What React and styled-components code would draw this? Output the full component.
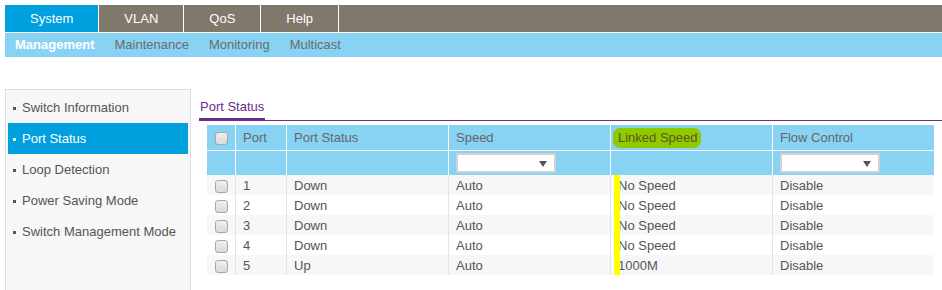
import styled, { createGlobalStyle } from 'styled-components';

const tabs = ['System', 'VLAN', 'QoS', 'Help'];
const subTabs = ['Management', 'Maintenance', 'Monitoring', 'Multicast'];
const menu = [
  'Switch Information',
  'Port Status',
  'Loop Detection',
  'Power Saving Mode',
  'Switch Management Mode',
];
const ports = [
  { port: 1, status: 'Down', speed: 'Auto', linked: 'No Speed', flow: 'Disable' },
  { port: 2, status: 'Down', speed: 'Auto', linked: 'No Speed', flow: 'Disable' },
  { port: 3, status: 'Down', speed: 'Auto', linked: 'No Speed', flow: 'Disable' },
  { port: 4, status: 'Down', speed: 'Auto', linked: 'No Speed', flow: 'Disable' },
  { port: 5, status: 'Up', speed: 'Auto', linked: '1000M', flow: 'Disable' },
];

const App = () => {
  return (
    <>
      <GlobalStyle />
      <Page>
        <TabBar>
          {tabs.map((t, i) => (
            <Tab key={t} active={i === 0}>{t}</Tab>
          ))}
        </TabBar>
        <SubBar>
          {subTabs.map((t, i) => (
            <SubTab key={t} active={i === 0}>{t}</SubTab>
          ))}
        </SubBar>
        <Body>
          <Sidebar>
            {menu.map((m) => (
              <MenuItem key={m} active={m === 'Port Status'}>
                <Bullet />
                {m}
              </MenuItem>
            ))}
          </Sidebar>
          <Main>
            <TitleBar>
              <TitleTab>Port Status</TitleTab>
            </TitleBar>
            <Table>
              <thead>
                <tr>
                  <Th width={28}><CheckBox /></Th>
                  <Th width={51}>Port</Th>
                  <Th width={162}>Port Status</Th>
                  <Th width={162}>Speed</Th>
                  <Th width={162}><Marker>Linked Speed</Marker></Th>
                  <Th width={162}>Flow Control</Th>
                </tr>
                <FilterRow>
                  <Th />
                  <Th />
                  <Th />
                  <Th><SelectBox /></Th>
                  <Th />
                  <Th><SelectBox /></Th>
                </FilterRow>
              </thead>
              <tbody>
                {ports.map((p, i) => (
                  <Row key={p.port} striped={i % 2 === 0}>
                    <Td><CheckBox /></Td>
                    <Td>{p.port}</Td>
                    <Td>{p.status}</Td>
                    <Td>{p.speed}</Td>
                    <LinkedTd>{p.linked}</LinkedTd>
                    <Td>{p.flow}</Td>
                  </Row>
                ))}
              </tbody>
            </Table>
          </Main>
        </Body>
      </Page>
    </>
  );
};

const GlobalStyle = createGlobalStyle`
  html, body {
    margin: 0;
    overflow: hidden;
    background: #fff;
    font-family: "Liberation Sans", Arial, sans-serif;
    font-size: 13px;
  }
`;

const Page = styled.div`
  padding: 5px 0 0 5px;
`;

const TabBar = styled.div`
  display: flex;
  height: 27px;
  background: #81786c;
  border-bottom: 1px solid #fff;
`;

const Tab = styled.div`
  padding: 0 25px;
  line-height: 27px;
  color: #fff;
  border-right: 1px solid #fff;
  background: ${(p) => (p.active ? '#00a0df' : 'transparent')};
`;

const SubBar = styled.div`
  display: flex;
  height: 24px;
  background: #88d3f4;
  padding-left: 0;
`;

const SubTab = styled.div`
  padding: 0 10px;
  line-height: 24px;
  color: ${(p) => (p.active ? '#fff' : '#6b6b6b')};
  font-weight: ${(p) => (p.active ? 'bold' : 'normal')};
`;

const Body = styled.div`
  display: flex;
  gap: 8px;
  margin-top: 32px;
`;

const Sidebar = styled.div`
  box-sizing: border-box;
  width: 186px;
  min-height: 240px;
  padding: 2px;
  background: #f7f7f7;
  border: 1px solid #dedede;
`;

const MenuItem = styled.div`
  display: flex;
  align-items: center;
  gap: 6px;
  height: 31px;
  padding-left: 5px;
  color: ${(p) => (p.active ? '#fff' : '#555')};
  background: ${(p) => (p.active ? '#00a0df' : 'transparent')};
`;

const Bullet = styled.span`
  width: 3px;
  height: 3px;
  background: currentColor;
  margin-top: 1px;
`;

const Main = styled.div`
  flex: 1;
`;

const TitleBar = styled.div`
  display: flex;
  border-bottom: 1px solid #6b2c8f;
  padding-top: 10px;
`;

const TitleTab = styled.div`
  line-height: 16px;
  padding: 0 1px 3px 1px;
  margin-bottom: -1px;
  color: #6b2c8f;
  border-bottom: 3px solid #6b2c8f;
`;

const Table = styled.table`
  table-layout: fixed;
  width: 727px;
  margin: 4px 8px 0 8px;
  border-collapse: separate;
  border-spacing: 0;
  color: #555;
`;

const Th = styled.th`
  box-sizing: border-box;
  width: ${(p) => (p.width ? `${p.width}px` : 'auto')};
  height: 25px;
  padding: 0 7px;
  text-align: left;
  font-weight: normal;
  color: #666;
  background: #88d3f4;
  border-left: 1px solid #fff;

  &:first-child {
    border-left: none;
    text-align: center;
    padding: 0;
  }
`;

const FilterRow = styled.tr`
  th {
    border-top: 1px solid #fff;
  }
`;

const Row = styled.tr`
  background: ${(p) => (p.striped ? '#f7f7f7' : '#fff')};
`;

const Td = styled.td`
  height: 20px;
  padding: 0 7px;
  border-left: 1px solid #e4e4e4;
  white-space: nowrap;

  &:first-child {
    border-left: none;
    text-align: center;
    padding: 0;
  }
`;

const LinkedTd = styled(Td)`
  position: relative;

  &::before {
    content: '';
    position: absolute;
    left: 3px;
    top: 0;
    bottom: 0;
    width: 6px;
    background: #ffff00;
  }
`;

const Marker = styled.span`
  display: inline-block;
  margin-left: -5px;
  padding: 3px 3px 3px 5px;
  line-height: 14px;
  border-radius: 7px;
  background: #8fc900;
  color: #575a1a;
`;

const CheckBox = styled.span`
  display: inline-block;
  box-sizing: border-box;
  width: 13px;
  height: 13px;
  vertical-align: middle;
  border: 1px solid #a8a8a8;
  border-radius: 3px;
  background: linear-gradient(#efefef, #d9d9d9);
`;

const SelectBox = styled.div`
  position: relative;
  box-sizing: border-box;
  width: 100px;
  height: 20px;
  background: #fff;
  border: 2px solid #d2d2d2;

  &::after {
    content: '';
    position: absolute;
    right: 7px;
    top: 6px;
    border-left: 4px solid transparent;
    border-right: 4px solid transparent;
    border-top: 6px solid #555;
  }
`;

export default App;
